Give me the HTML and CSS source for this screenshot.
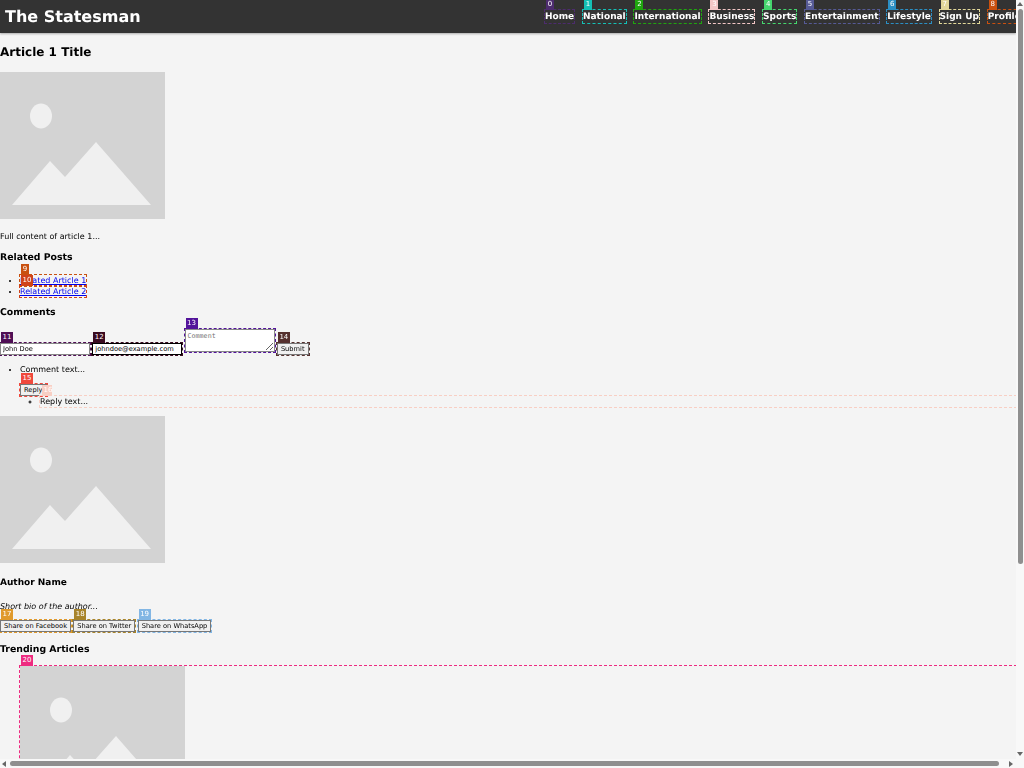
FILE: index.html
```html
<!DOCTYPE html>
<html lang="en">
<head>
    <meta charset="UTF-8">
    <meta name="viewport" content="width=device-width, initial-scale=1.0">
    <title>The Statesman</title>
    <link rel="stylesheet" href="styles.css">
</head>
<body>
    <svg class="defs" width="0" height="0" aria-hidden="true">
        <symbol id="placeholder" viewBox="0 0 165 147">
            <rect width="165" height="147" fill="#d3d3d3" />
            <ellipse cx="41" cy="44" rx="11" ry="12.5" fill="#f0f0f0" />
            <path d="M12 133 L50 89 L65 105 L96 70 L151 133 Z" fill="#f0f0f0" />
        </symbol>
    </svg>

    <div class="page">
        <header class="topbar">
            <div class="logo">The Statesman</div>
            <nav class="nav">
                <a class="mark mark-0" href="#"><span class="badge">0</span>Home</a>
                <a class="mark mark-1" href="#"><span class="badge">1</span>National</a>
                <a class="mark mark-2" href="#"><span class="badge">2</span>International</a>
                <a class="mark mark-3" href="#"><span class="badge">3</span>Business</a>
                <a class="mark mark-4" href="#"><span class="badge">4</span>Sports</a>
                <a class="mark mark-5" href="#"><span class="badge">5</span>Entertainment</a>
                <a class="mark mark-6" href="#"><span class="badge">6</span>Lifestyle</a>
                <a class="mark mark-7" href="#"><span class="badge">7</span>Sign Up</a>
                <a class="mark mark-8" href="#"><span class="badge">8</span>Profile</a>
            </nav>
        </header>

        <main>
            <section class="article">
                <h1>Article 1 Title</h1>
                <svg class="picture"><use href="#placeholder" /></svg>
                <p class="content">Full content of article 1...</p>
            </section>

            <section class="related">
                <h2>Related Posts</h2>
                <ul>
                    <li><a class="mark mark-9" href="#"><span class="badge">9</span>Related Article 1</a></li>
                    <li><a class="mark mark-10" href="#"><span class="badge">10</span>Related Article 2</a></li>
                </ul>
            </section>

            <section class="comments">
                <h2>Comments</h2>
                <form class="comment-form">
                    <span class="mark mark-11 field"><span class="badge">11</span><input type="text" value="John Doe"></span>
                    <span class="mark mark-12 field"><span class="badge">12</span><input type="text" class="input-mail" value="johndoe@example.com"></span>
                    <span class="mark mark-13 field field-text"><span class="badge">13</span><textarea placeholder="Comment"></textarea></span>
                    <span class="mark mark-14 field"><span class="badge">14</span><button type="button">Submit</button></span>
                </form>
                <ul class="comment-list">
                    <li>
                        Comment text...
                        <div class="reply-row">
                            <span class="mark mark-15 field"><span class="badge">15</span><button type="button" class="btn-reply">Reply</button></span>
                        </div>
                        <ul class="reply-list">
                            <li class="mark mark-16"><span class="badge">16</span>Reply text...</li>
                        </ul>
                    </li>
                </ul>
            </section>

            <section class="author">
                <svg class="picture"><use href="#placeholder" /></svg>
                <h4>Author Name</h4>
                <p class="bio">Short bio of the author...</p>
            </section>

            <div class="share">
                <span class="mark mark-17 field"><span class="badge">17</span><button type="button">Share on Facebook</button></span>
                <span class="mark mark-18 field"><span class="badge">18</span><button type="button">Share on Twitter</button></span>
                <span class="mark mark-19 field"><span class="badge">19</span><button type="button">Share on WhatsApp</button></span>
            </div>

            <section class="trending">
                <h2>Trending Articles</h2>
                <div class="trending-list mark mark-20">
                    <span class="badge">20</span>
                    <svg class="picture"><use href="#placeholder" /></svg>
                </div>
            </section>
        </main>
    </div>

    <div class="vbar">
        <span class="arrow arrow-up"></span>
        <span class="thumb thumb-v"></span>
        <span class="arrow arrow-down"></span>
    </div>
    <div class="hbar">
        <span class="arrow arrow-left"></span>
        <span class="thumb thumb-h"></span>
        <span class="arrow arrow-right"></span>
    </div>
    <div class="corner"></div>
</body>
</html>
```

FILE: styles.css
```css
* {
    margin: 0;
    padding: 0;
    box-sizing: border-box;
}

body {
    display: grid;
    grid-template-columns: 1fr 8px;
    grid-template-rows: 1fr 9px;
    height: 100vh;
    overflow: hidden;
    background-color: #f4f4f4;
    color: #000;
    font-family: 'DejaVu Sans', sans-serif;
    font-size: 8px;
    line-height: 11px;
    text-rendering: geometricPrecision;
}

.defs {
    position: absolute;
}

/* the whole shot is a little soft */
.page {
    overflow: hidden;
    min-width: 0;
    min-height: 0;
    filter: blur(0.7px);
}

/* scrollbars */
.vbar,
.hbar,
.corner {
    display: flex;
    align-items: center;
    background-color: #f8f8f8;
}

.vbar {
    flex-direction: column;
    justify-content: space-between;
    padding: 2px 0 3px;
}

.hbar {
    justify-content: space-between;
    padding: 0 3px 0 2px;
}

.thumb {
    display: block;
    background-color: #8f8f8f;
    border-radius: 3px;
}

.thumb-v {
    width: 5px;
    height: 555px;
    margin-bottom: auto;
    margin-top: 3px;
}

.thumb-h {
    width: 989px;
    height: 5px;
    margin-right: auto;
    margin-left: 4px;
}

.arrow {
    display: block;
    flex: none;
    width: 0;
    height: 0;
    border: 3px solid transparent;
}

.arrow-up {
    border-top-width: 0;
    border-bottom: 4px solid #666;
}

.arrow-down {
    border-bottom-width: 0;
    border-top: 4px solid #666;
}

.arrow-left {
    border-left-width: 0;
    border-right: 4px solid #666;
}

.arrow-right {
    border-right-width: 0;
    border-left: 4px solid #666;
}

/* numbered overlay marks */
.mark {
    position: relative;
    outline: 1px dashed var(--mark);
}

.badge {
    position: absolute;
    left: 1px;
    top: -11px;
    min-width: 8px;
    height: 11px;
    padding: 0 1.5px;
    background-color: var(--mark);
    color: #fff;
    font-family: 'DejaVu Sans', sans-serif;
    font-size: 7px;
    font-weight: normal;
    font-style: normal;
    line-height: 11px;
    text-align: center;
    text-shadow: none;
}

.mark-0 { --mark: #4d2c6e; }
.mark-1 { --mark: #14c0b6; }
.mark-2 { --mark: #1fa60f; }
.mark-3 { --mark: #f2c6c6; }
.mark-4 { --mark: #45d66e; }
.mark-5 { --mark: #565a96; }
.mark-6 { --mark: #2b8fc4; }
.mark-7 { --mark: #e2d89a; }
.mark-8 { --mark: #c9500f; }
.mark-9 { --mark: #c9500f; }
.mark-10 { --mark: #d0421a; }
.mark-11 { --mark: #4f0f55; }
.mark-12 { --mark: #3a0a20; }
.mark-13 { --mark: #52139a; }
.mark-14 { --mark: #55302e; }
.mark-15 { --mark: #f0483c; }
.mark-16 { --mark: #f8cfc4; }
.mark-17 { --mark: #e09a2c; }
.mark-18 { --mark: #a8842a; }
.mark-19 { --mark: #82b6e4; }
.mark-20 { --mark: #ee2a80; }

/* header */
.topbar {
    display: flex;
    align-items: center;
    height: 33px;
    background-color: #333;
    box-shadow: 0 1px 2px rgba(0, 0, 0, 0.3);
}

.logo {
    flex: 0 0 545px;
    padding-left: 5px;
    color: #fff;
    font-size: 16px;
    font-weight: bold;
    line-height: 33px;
}

.nav {
    display: flex;
    flex: none;
    gap: 8.75px;
}

.nav a {
    display: block;
    height: 13px;
    color: #fff;
    font-size: 9px;
    font-weight: bold;
    line-height: 14px;
    text-decoration: none;
}

/* sections */
h1 {
    height: 39px;
    padding-top: 11px;
    font-size: 12px;
    line-height: 16px;
}

h2 {
    font-size: 9.33px;
    line-height: 13px;
}

.picture {
    display: block;
    width: 165px;
    height: 147px;
}

.content {
    margin-top: 12px;
}

.related {
    margin-top: 9px;
}

.related ul {
    margin-top: 11px;
    padding-left: 20px;
}

.related a {
    display: inline-block;
    color: #00e;
    text-decoration: underline;
}

.comments {
    margin-top: 9px;
}

.comment-form {
    display: flex;
    align-items: flex-end;
    gap: 2.3px;
    margin-top: 10px;
}

.field {
    display: block;
}

.field-text {
    margin-bottom: 3px;
}

input {
    display: block;
    width: 90px;
    height: 12px;
    padding: 0 2px;
    background-color: #fff;
    border: 1px solid #888;
    font-family: 'DejaVu Sans', sans-serif;
    font-size: 6.67px;
}

.input-mail {
    border-color: #000;
}

textarea {
    display: block;
    width: 90px;
    height: 23px;
    padding: 2px;
    background-color: #fff;
    border: 1px solid #888;
    font-family: 'DejaVu Sans Mono', monospace;
    font-size: 6.67px;
}

button {
    display: block;
    height: 12px;
    padding: 0 3px;
    background-color: #f0f0f0;
    border: 1px solid #777;
    color: #000;
    font-family: 'DejaVu Sans', sans-serif;
    font-size: 6.67px;
    line-height: 10px;
}

.btn-reply {
    width: 27px;
    padding: 0 0 0 3px;
    text-align: left;
}

.comment-list {
    margin-top: 9px;
    padding-left: 20px;
}

.reply-row {
    display: flex;
    margin-top: 9px;
}

.reply-list {
    padding-left: 20px;
    list-style: circle;
}

.reply-list .badge {
    left: 2px;
    width: 10px;
}

.author {
    margin-top: 9px;
}

.author h4 {
    margin-top: 15px;
    font-size: 9px;
}

.bio {
    margin-top: 12px;
    font-style: italic;
}

.share {
    display: flex;
    gap: 2.3px;
    margin-top: 8px;
}

.trending {
    margin-top: 11px;
}

.trending-list {
    margin: 10px 0 0 20px;
    padding-bottom: 200px;
}
```
